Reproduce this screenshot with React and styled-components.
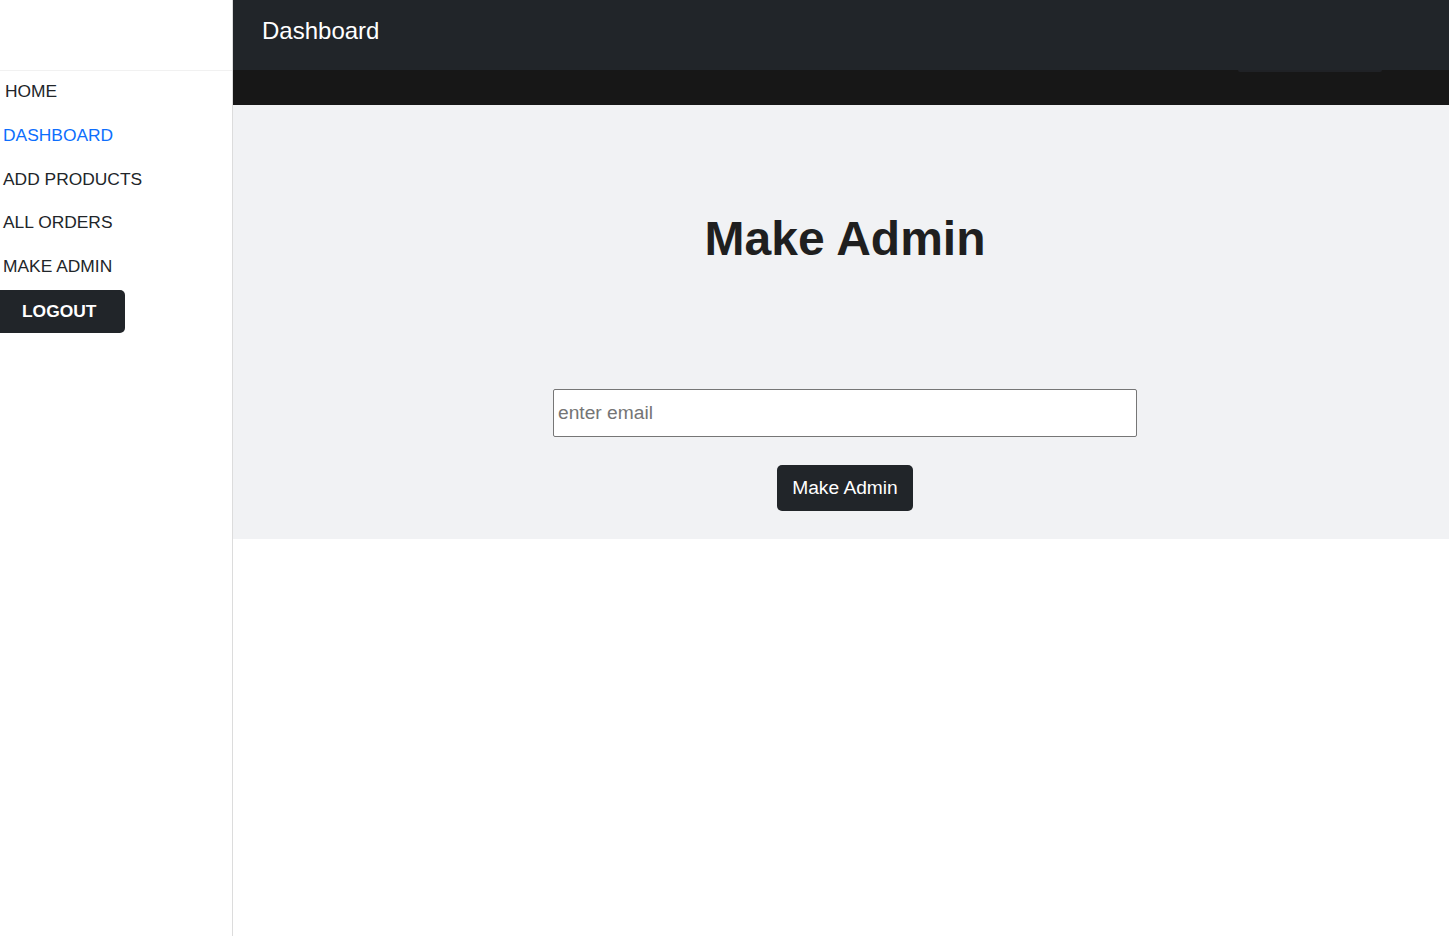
import styled, { createGlobalStyle } from 'styled-components';

const GlobalStyle = createGlobalStyle`
  body {
    margin: 0;
    font-family: "Liberation Sans", Arial, sans-serif;
    color: #212529;
    background: #fff;
  }
  * {
    box-sizing: border-box;
  }
`;

const Layout = styled.div`
  display: flex;
  min-height: 100vh;
`;

const Sidebar = styled.aside`
  width: 233px;
  flex-shrink: 0;
  border-right: 1px solid #dcdcdc;
  display: flex;
  flex-direction: column;
`;

const SidebarTop = styled.div`
  height: 71px;
  border-bottom: 1px solid #f1f1f1;
`;

const NavList = styled.nav`
  margin-top: -1px;
  display: flex;
  flex-direction: column;
  align-items: flex-start;
`;

const NavItem = styled.a`
  height: 43.75px;
  line-height: 43.75px;
  padding-left: ${props => (props.indent ? '5px' : '3px')};
  font-size: 17.4px;
  color: ${props => (props.active ? '#0d6efd' : '#212529')};
  text-decoration: none;
  cursor: pointer;
`;

const LogoutButton = styled.button`
  margin-top: 1px;
  width: 125px;
  height: 43px;
  border: none;
  border-radius: 0 5px 5px 0;
  padding: 0 0 0 22px;
  text-align: left;
  background: #212529;
  color: #fff;
  font-family: inherit;
  font-size: 17.4px;
  font-weight: 700;
  cursor: pointer;
`;

const Main = styled.main`
  flex: 1;
  display: flex;
  flex-direction: column;
`;

const TopBar = styled.header`
  height: 70px;
  background: #212529;
  padding: 17px 0 0 29px;
`;

const TopTitle = styled.div`
  color: #fff;
  font-size: 24px;
`;

const Band = styled.div`
  height: 35px;
  background: #171717;
  display: flex;
  justify-content: flex-end;
  padding-right: 67px;
`;

const DropdownEdge = styled.div`
  width: 144px;
  height: 2px;
  background: #202226;
  border-radius: 0 0 6px 6px;
`;

const Content = styled.section`
  background: #f1f2f4;
  padding: 106px 0 28px 8px;
  display: flex;
  flex-direction: column;
  align-items: center;
`;

const Heading = styled.h1`
  margin: 0;
  font-size: 48px;
  font-weight: 700;
  color: #1f1f1f;
`;

const Form = styled.form`
  margin-top: 123px;
  display: flex;
  flex-direction: column;
  align-items: center;
  gap: 28px;
`;

const EmailInput = styled.input`
  width: 584px;
  height: 48px;
  border: 1px solid #767676;
  border-radius: 2px;
  padding: 0 4px;
  background: #fff;
  font-family: inherit;
  font-size: 19.2px;
  color: #212529;

  &::placeholder {
    color: #757575;
  }
`;

const SubmitButton = styled.button`
  height: 46px;
  padding: 0 15px;
  border: none;
  border-radius: 5px;
  background: #212529;
  color: #fff;
  font-family: inherit;
  font-size: 19.2px;
  cursor: pointer;
`;

const navLinks = [
  { label: 'HOME', indent: true },
  { label: 'DASHBOARD', active: true },
  { label: 'ADD PRODUCTS' },
  { label: 'ALL ORDERS' },
  { label: 'MAKE ADMIN' },
];

const App = () => {
  return (
    <Layout>
      <GlobalStyle />
      <Sidebar>
        <SidebarTop />
        <NavList>
          {navLinks.map(link => (
            <NavItem key={link.label} active={link.active} indent={link.indent}>
              {link.label}
            </NavItem>
          ))}
          <LogoutButton>LOGOUT</LogoutButton>
        </NavList>
      </Sidebar>

      <Main>
        <TopBar>
          <TopTitle>Dashboard</TopTitle>
        </TopBar>
        <Band>
          <DropdownEdge />
        </Band>
        <Content>
          <Heading>Make Admin</Heading>
          <Form onSubmit={e => e.preventDefault()}>
            <EmailInput type="email" placeholder="enter email" />
            <SubmitButton type="submit">Make Admin</SubmitButton>
          </Form>
        </Content>
      </Main>
    </Layout>
  );
};

export default App;
